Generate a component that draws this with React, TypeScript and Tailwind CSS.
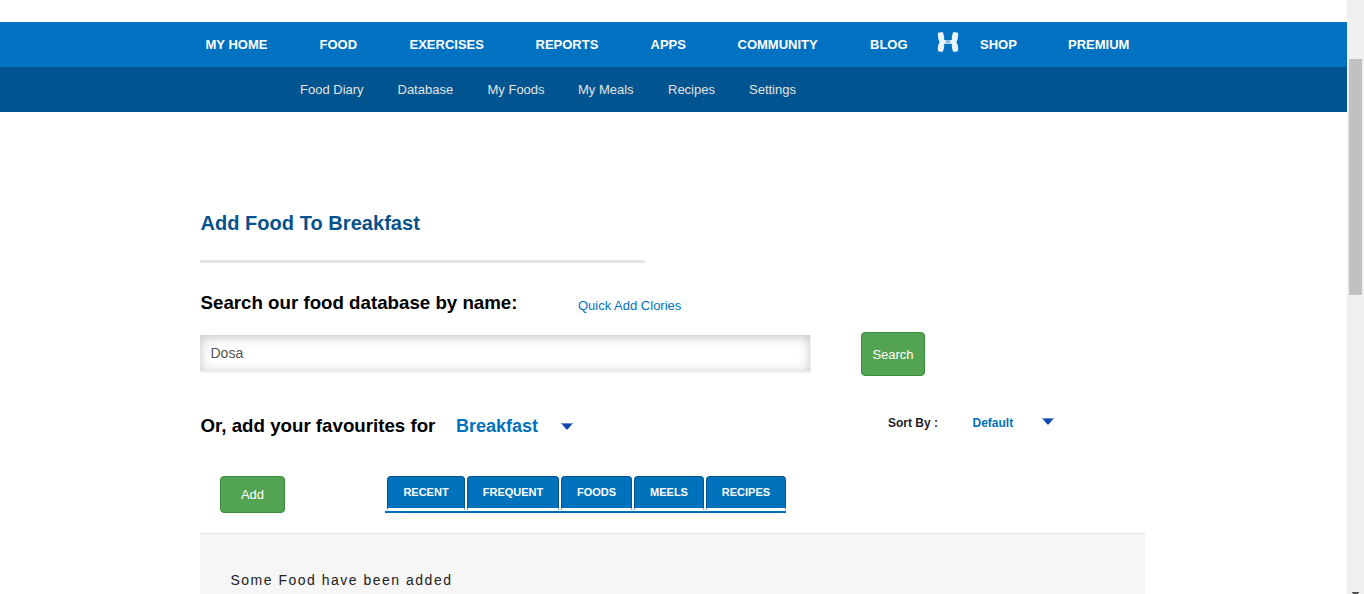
const mainNav = [
  { label: "MY HOME", width: "w-[114px]" },
  { label: "FOOD", width: "w-[90px]" },
  { label: "EXERCISES", width: "w-[126px]" },
  { label: "REPORTS", width: "w-[115px]" },
  { label: "APPS", width: "w-[87px]" },
  { label: "COMMUNITY", width: "w-[132.5px]" },
  { label: "BLOG", width: "w-[67px]" },
];

const subNav = [
  { label: "Food Diary", width: "w-[97.5px]" },
  { label: "Database", width: "w-[90px]" },
  { label: "My Foods", width: "w-[90.5px]" },
  { label: "My Meals", width: "w-[90px]" },
  { label: "Recipes", width: "w-[81px]" },
  { label: "Settings", width: "w-[60px]" },
];

const tabs = [
  { label: "RECENT", width: "w-[78px]" },
  { label: "FREQUENT", width: "w-[92px]" },
  { label: "FOODS", width: "w-[71px]" },
  { label: "MEELS", width: "w-[70px]" },
  { label: "RECIPES", width: "w-[80px]" },
];

function BrandMark() {
  return (
    <svg width="22" height="20" viewBox="0 0 22 20" className="block shrink-0" fill="#eaf4fb">
      <path d="M1 0.8 L5.6 0 C7 2.8 7.4 5.4 7.1 8 C9 8.5 13 8.5 14.9 8 C14.6 5.4 15 2.8 16.4 0 L21 0.8 C21.5 4.4 20.9 7.6 19.4 10 C20.9 12.4 21.5 15.6 21 19.2 L16.4 20 C15 17.2 14.6 14.6 14.9 12 C13 11.5 9 11.5 7.1 12 C7.4 14.6 7 17.2 5.6 20 L1 19.2 C0.5 15.6 1.1 12.4 2.6 10 C1.1 7.6 0.5 4.4 1 0.8 Z" />
      <ellipse cx="11" cy="10" rx="3" ry="0.7" fill="#5aa3d8" />
    </svg>
  );
}

function Caret() {
  return (
    <svg width="12" height="7" viewBox="0 0 12 7" className="block shrink-0">
      <path d="M0 0H12L6.8 6.2Q6 6.9 5.2 6.2Z" fill="#0d47b0" />
      <path d="M0 0H12L11.2 1H0.8Z" fill="#6c8fd0" />
    </svg>
  );
}

function Scrollbar() {
  return (
    <div className="flex w-[17px] shrink-0 flex-col justify-between overflow-hidden bg-[#f0f0f0] pt-[59px]">
      <div className="ml-[2px] h-[236px] w-[13px] bg-[#c1c1c1]" />
      <svg width="7" height="2" viewBox="0 0 7 2" className="ml-[5px] block" fill="#505050">
        <path d="M0 0H7V1H6V2H1V1H0Z" />
      </svg>
    </div>
  );
}

export default function App() {
  return (
    <div className="flex h-[594px] w-[1364px] overflow-hidden bg-white font-['Liberation_Sans',Arial,sans-serif] text-black">
      <div className="min-w-0 flex-1">
        <header className="pt-[22px]">
          <nav className="flex h-[45px] items-center bg-[#0072c1] pl-[205.5px] text-[13px] font-bold whitespace-nowrap text-white">
            {mainNav.map((item) => (
              <a key={item.label} className={item.width}>
                {item.label}
              </a>
            ))}
            <div className="-mt-[5px] w-[43px] shrink-0">
              <BrandMark />
            </div>
            <a className="w-[88px]">SHOP</a>
            <a>PREMIUM</a>
          </nav>
          <nav className="flex h-[45px] items-center bg-[#00548f] pl-[300px] text-[13px] whitespace-nowrap text-[#e4e4e4]">
            {subNav.map((item) => (
              <a key={item.label} className={item.width}>
                {item.label}
              </a>
            ))}
          </nav>
        </header>

        <main className="ml-[200px] w-[945px] pt-[98px] whitespace-nowrap">
          <h1 className="h-[50px] pl-[0.5px] text-[20px] leading-[26px] font-bold tracking-[0.04px] text-[#07528a]">
            Add Food To Breakfast
          </h1>
          <div className="h-[3px] w-[445px] bg-[#e5e5e5]" />

          <div className="flex h-[69px] pt-[28px] pl-[0.5px]">
            <h3 className="w-[377.5px] text-[18.72px] leading-[24px] font-bold">Search our food database by name:</h3>
            <a className="pt-[7px] text-[13px] leading-[16px] text-[#0072bc]">Quick Add Clories</a>
          </div>

          <div className="flex h-11">
            <input
              type="text"
              defaultValue="Dosa"
              className="mt-[3px] h-[38px] w-[611px] border-r border-b-2 border-[#f0f0f0] bg-white pb-px pl-[10.5px] text-[14px] text-[#555] shadow-[inset_0_2px_12px_rgba(0,0,0,0.24)] outline-none"
            />
            <button className="ml-[50px] h-11 w-16 rounded-[4px] border border-[#3d8b40] bg-[#52a352] pt-[2px] text-[13px] text-white">
              Search
            </button>
          </div>

          <div className="flex h-[100px] pt-[37px] pl-[0.5px]">
            <h3 className="w-[255.5px] pt-px text-[18.72px] leading-[24px] font-bold">Or, add your favourites for</h3>
            <span className="w-[105px] pt-px text-[18px] leading-[25px] font-bold text-[#0072bc]">Breakfast</span>
            <div className="w-[327px] pt-[10px]">
              <Caret />
            </div>
            <span className="w-[84.5px] pt-[2px] text-[12px] leading-[16px] font-bold text-[#1f1f1f]">Sort By :</span>
            <span className="w-[69.5px] pt-[2px] text-[12px] leading-[16px] font-bold text-[#0072bc]">Default</span>
            <div className="pt-[5px]">
              <Caret />
            </div>
          </div>

          <div className="flex h-[57px]">
            <button className="ml-5 h-[37px] w-[65px] rounded-[4px] border border-[#3d8b40] bg-[#52a352] text-[13px] text-white">
              Add
            </button>
            <div className="ml-[100px] flex h-[37px] w-[401px] gap-[2px] border-b-2 border-[#0072bc] pl-[2px]">
              {tabs.map((tab) => (
                <a
                  key={tab.label}
                  className={`${tab.width} flex h-[34px] shrink-0 flex-col text-center text-[11px] font-bold text-white`}
                >
                  <span className="block h-8 rounded-t-[4px] border-x border-t border-[#00548f] bg-[#0072bc] leading-[31px]">
                    {tab.label}
                  </span>
                  <span className="block h-[2px] border-x border-[#7fa9c7]" />
                </a>
              ))}
            </div>
          </div>

          <section className="h-[61px] border-t border-[#e3e3e3] bg-[#f6f6f6] pt-[37px] pl-[30.5px]">
            <p className="text-[14px] leading-[18px] tracking-[1.5px] text-[#222]">Some Food have been added</p>
          </section>
        </main>
      </div>
      <Scrollbar />
    </div>
  );
}
